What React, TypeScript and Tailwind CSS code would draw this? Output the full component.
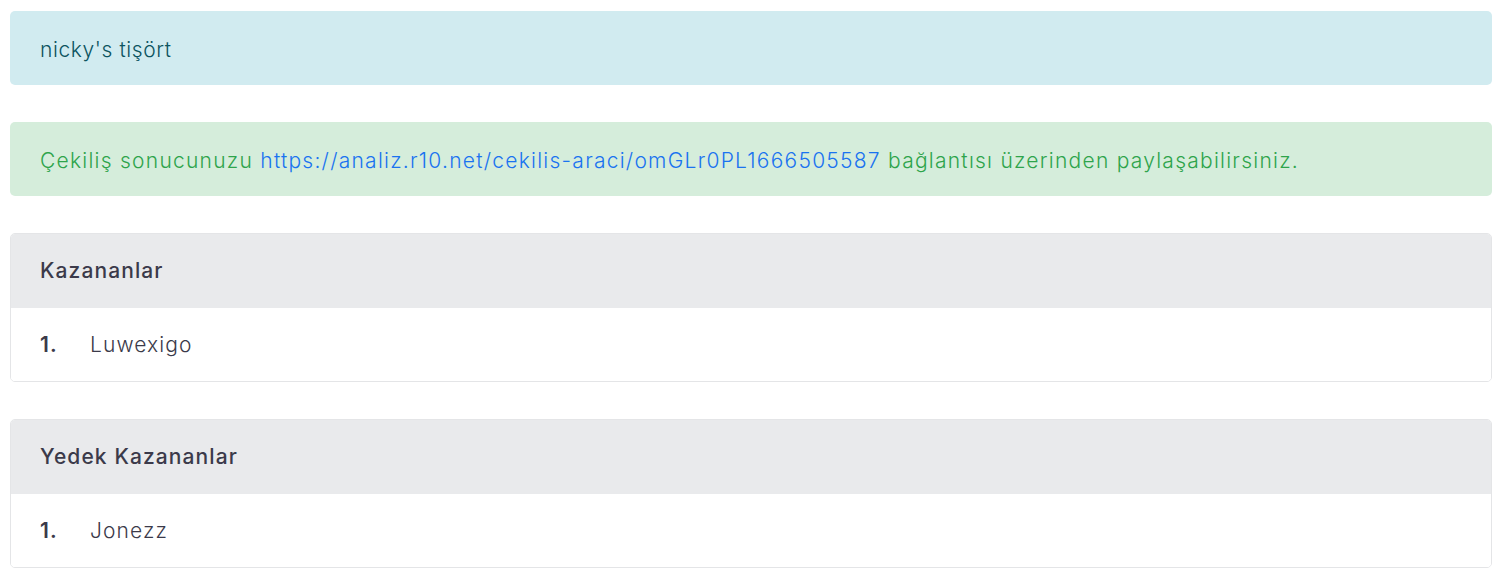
import React from "react"

const winners = ["Luwexigo"]
const backups = ["Jonezz"]

function ResultCard({ title, names }: { title: string; names: string[] }) {
  return (
    <div className="rounded-[5px] border border-[#e4e5e7] overflow-hidden">
      <div className="bg-[#e9eaec] h-[74px] flex items-center px-[29px] text-[21px] font-medium text-[#3b3a4a]">
        {title}
      </div>
      <ol>
        {names.map((name, i) => (
          <li key={name} className="bg-white h-[73px] flex items-center px-[29px] text-[21px] font-light text-[#3b3a4a]">
            <span className="w-[50px] font-semibold">{i + 1}.</span>
            <span>{name}</span>
          </li>
        ))}
      </ol>
    </div>
  )
}

export default function App() {
  const url = "https://analiz.r10.net/cekilis-araci/omGLr0PL1666505587"

  return (
    <div className="min-h-screen bg-white pl-[10px] pr-[15px] pt-[11px] flex flex-col gap-[37px] font-['Inter',sans-serif] tracking-[1.1px]">
      <div className="bg-[#d1ebf0] rounded-[5px] h-[74px] flex items-center pt-[3px] px-[30px] text-[21px] font-light tracking-[0.6px] text-[#0c5460]">
        nicky's tişört
      </div>

      <div className="bg-[#d5eddb] rounded-[5px] h-[74px] flex items-center pt-[3px] px-[30px] text-[21px] font-light tracking-[1.25px] text-[#2ea44b]">
        <p>
          Çekiliş sonucunuzu{" "}
          <a href={url} className="text-[#1a73f0]">
            {url}
          </a>{" "}
          bağlantısı üzerinden paylaşabilirsiniz.
        </p>
      </div>

      <ResultCard title="Kazananlar" names={winners} />
      <ResultCard title="Yedek Kazananlar" names={backups} />
    </div>
  )
}
